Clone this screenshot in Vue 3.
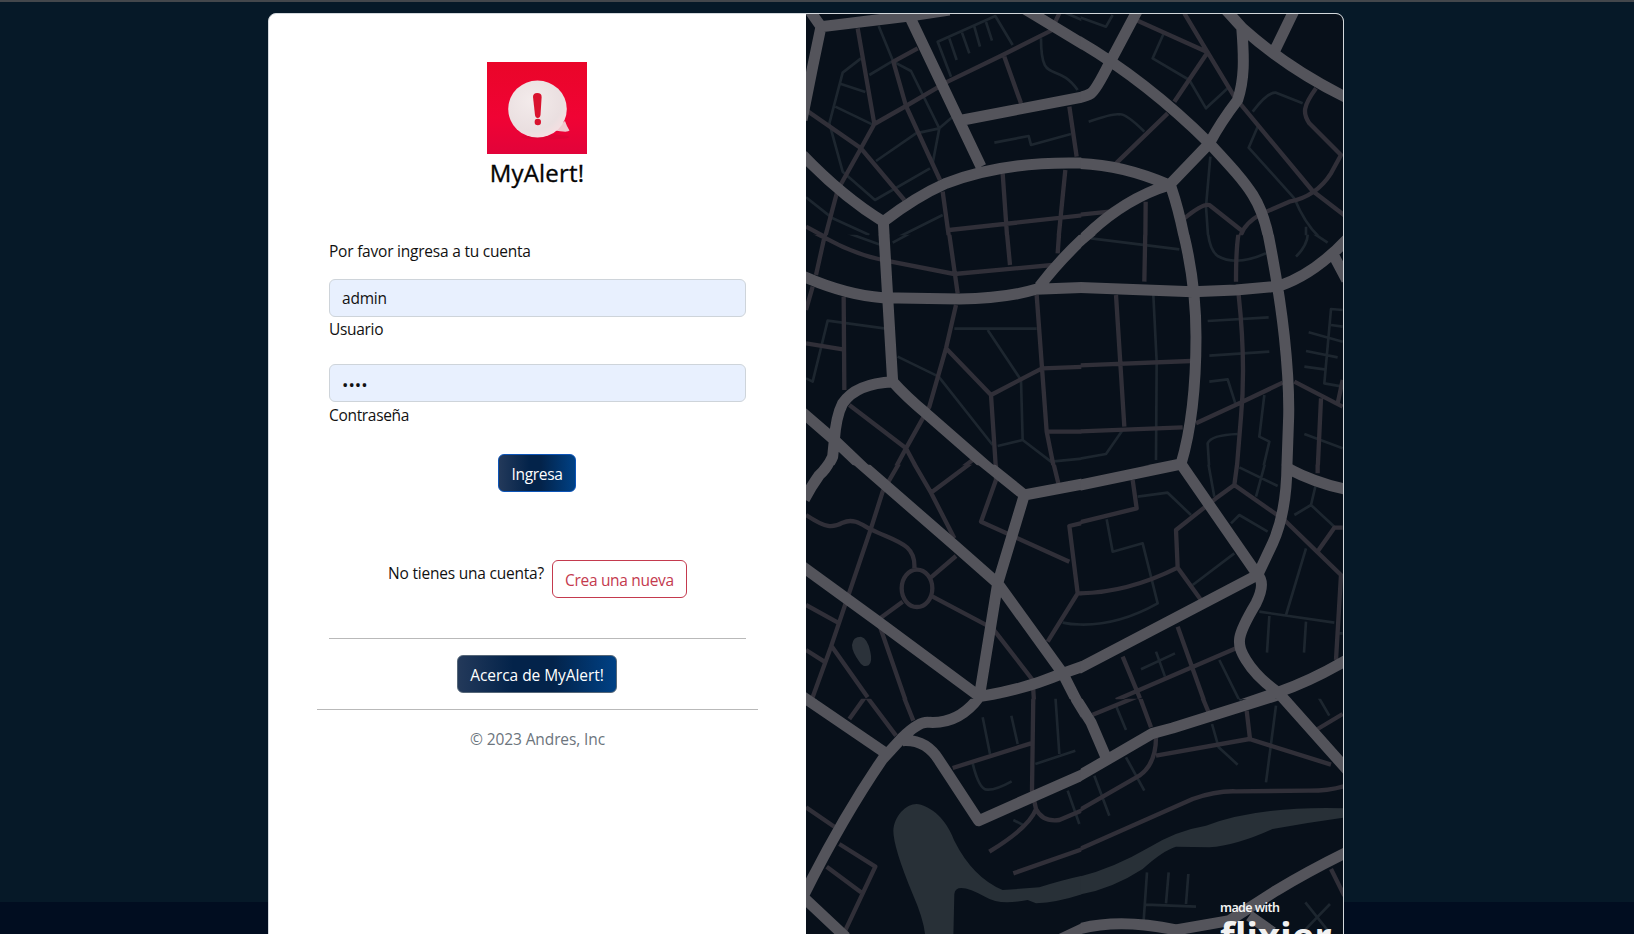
<script setup>
import { ref } from 'vue'

const user = ref('admin')
const password = ref('1234')

// The city map is split into blocks; every block lists its streets by rank.
const blocks = [
  {
    col: 0,
    row: 0,
    thin: 'M218 78L262 185L315 213L400 385L380 490M165 175L110 218L70 370L110 515L207 600L372 505M105 252L178 276M88 320L200 374M210 483L330 400L400 385L440 350M435 230L395 125L568 48L620 135M430 115L452 180M468 98L490 160M505 80L522 140M540 66L558 122M705 115C705 260 750 180 815 270M565 428L668 408L675 435L795 402M0 592L80 655L190 705M270 715L410 645M770 35L840 65M262 182L190 225',
    mid: 'M155 85L205 372L165 445L95 570L55 720M0 330L165 445L295 600M205 372L300 318L425 245L590 165L735 92L760 40M335 145L262 185L300 318L402 540M595 170L645 310M790 320L812 470M410 575L430 720M430 690L840 645M590 520L604 720M778 510L757 720M0 680L60 712',
    major: 'M10 30L45 80L20 200L-12 360M45 80L310 48L430 30M310 48L525 500M-10 465Q110 590 232 665Q330 590 420 550Q600 480 850 490M232 665L236 740M470 360L850 287M640 17L678 40L860 150M795 753L850 703'
  },
  {
    col: 1,
    row: 0,
    thin: 'M0 48L90 80L110 45M262 103L230 175L340 240L390 325L455 265M38 365Q110 340 130 343Q150 340 205 395M530 335Q575 275 600 278L680 310M545 380L518 443L655 595Q690 680 740 720M403 470L390 620L397 720M690 680L690 720',
    mid: 'M180 60L395 157L295 305M325 40L395 157L475 290L710 573L810 650M275 340L120 490M720 265C680 320 680 340 700 370L795 465L765 520Q720 590 640 605L560 640Q500 670 490 720M0 645L100 635M209 605L208 720M325 655Q380 610 400 615L495 690M0 400L5 470',
    major: 'M-10 114Q200 233 400 430C520 560 560 600 582 735M185 30L100 190Q60 270 45 280Q30 290 -10 297M450 30L500 85Q640 210 820 297M497 80C505 180 505 240 485 300Q435 365 400 430L280 555M655 30L597 150M-10 490Q130 490 280 555Q130 600 0 738M285 560Q312 640 330 740'
  },
  {
    col: 0,
    row: 1,
    thin: 'M100 0L225 45M260 38L330 0M0 445L20 455L65 272L240 296M445 296L692 296M545 300L645 450L650 630L575 648M650 630L735 695L840 685M275 380L398 440L560 645',
    mid: 'M10 0L60 25Q150 75 240 92L445 132L740 105M60 0L30 135M20 170L0 240M428 0L455 190M450 225L420 355L370 530L300 655L265 720M430 5L500 0M602 0L612 105M760 0L755 70M113 200L115 480M0 340L110 358M420 355L555 495L708 415L840 410M555 495L570 720M692 195L722 605L745 720M722 605L840 605M130 525L300 655L335 720M460 720L500 690',
    major: 'M-10 138Q120 195 230 203L460 207Q600 205 690 178L850 172M232 -20L260 455M700 170Q760 90 850 8M260 455Q300 500 360 550L575 738M262 455Q150 460 110 520Q90 560 85 630L80 680Q68 710 35 740M-10 548L85 630L190 730'
  },
  {
    col: 1,
    row: 1,
    thin: 'M45 25L310 58M232 195L242 395L240 690M395 0Q400 60 425 78Q480 110 570 70M395 273L578 262M400 377L580 365M400 455L455 448L478 520M485 612Q405 615 395 640L400 720M565 495L550 620L580 635L560 720M0 688L90 672L140 600M695 0Q700 40 660 80M705 5L755 38M800 240L765 237L745 460L800 470M765 285L800 290M698 307L800 335M690 363L785 382M685 410L745 418M685 612L800 655M490 710L520 720',
    mid: 'M208 0L205 155M120 195L145 590M-5 407L345 393M-5 605L320 592M360 580L490 520L620 458M490 0Q480 40 480 155M488 195Q510 400 495 560L482 720M655 455L800 530M735 505L725 720M800 450L785 520',
    major: 'M-10 52L15 30L75 -20M-10 172Q200 180 350 185L480 180L610 168Q720 130 820 20M316 -15Q360 150 360 320Q360 550 315 702M572 -10Q610 180 625 320Q640 460 638 560L632 730M775 80L812 150M120 741L315 702L345 745M635 715L690 740'
  },
  {
    col: 0,
    row: 2,
    thin: 'M770 488Q800 495 840 493M750 5L840 0',
    mid: 'M285 0L230 95L195 205L75 560L15 725M0 165C60 205 80 205 110 188C150 170 180 205 195 208C270 245 330 250 325 325M375 352L450 288M380 410L560 505L680 660L684 725M290 425L215 480L300 725M318 0L375 98L445 235M375 98L500 5M570 0V60L525 185L790 305M740 0L757 70M845 185L790 198L815 400L840 400M815 400L725 545M0 435L100 490M0 570L55 605M78 560L185 712M379 385A46 56 0 1 1 287 385A46 56 0 1 1 379 385',
    major: 'M75 -10Q68 20 40 45Q15 80 -5 118M140 -10L450 260L575 370L770 640L820 738M-10 320L210 480L540 724M512 -10L655 105L850 68M655 105L575 370L520 710Q650 690 770 640L850 612M-30 696L40 744'
  },
  {
    col: 1,
    row: 2,
    thin: 'M185 110L275 98L345 165M92 178L110 275L200 250L245 430Q120 500 0 493M395 0L415 110M570 0L540 110M490 22L605 78M465 190L490 165L575 215M350 375L475 280M718 80L705 135L655 165M705 135L775 200M690 265L630 465M550 455L775 488M580 468L573 578M690 485L684 578M195 628L297 580M240 575L267 650M430 600L492 725M780 520L800 520',
    mid: 'M0 190L182 145L170 60M0 290L5 400Q150 400 305 323L300 210L420 115L475 75L485 0M305 323L375 420M475 75L625 180L795 345L780 600M725 0L725 40M800 203L775 203L722 278M305 500L387 730M140 590L192 715M120 720L480 565',
    major: 'M-10 80L315 12L545 345L-10 635M633 -10Q635 150 590 250L545 345Q570 370 540 430C480 530 480 550 510 600Q540 650 605 697M635 25Q720 70 812 88M480 740L605 697Q700 665 812 600M605 697L650 745M-40 640L10 738'
  },
  {
    col: 0,
    row: 3,
    thin: 'M530 70L552 180M616 65L635 150M748 5L760 180M688 210L808 170M500 208Q520 290 545 287Q570 288 617 262M622 378L655 395M785 290L820 390',
    mid: 'M130 75L180 5L270 125M290 0L322 80M440 222L675 148M682 0L678 290L690 345Q670 400 550 473M690 345Q710 385 760 378L845 342M622 538L845 460M0 340L85 398M100 450L208 518L115 715M62 518L165 595',
    major: 'M-30 -6L235 175M520 8Q460 90 370 85Q340 80 290 130L230 195Q110 370 -8 606M-8 610L120 730M290 140Q360 135 400 200L518 380L850 233M400 -80L520 8Q650 -12 770 -62M794 -32L811 16L850 80M765 735L850 695',
    water: 'M262 410C265 360 310 320 345 332C400 350 430 400 445 440Q500 550 590 588L700 580Q780 555 845 542L845 595Q760 625 690 628L665 618Q580 635 540 610Q450 560 445 600L442 730L358 730Q355 680 320 600Q262 460 262 410Z'
  },
  {
    col: 1,
    row: 3,
    thin: 'M120 35L150 108M55 245L100 365M150 190L205 290M485 0L495 20M408 90L428 160L485 212M600 35L570 265M725 5L760 65M213 535L203 680M278 535L270 628M337 540L330 630M210 632L360 638M688 625L760 715M762 630L680 715M0 360L10 395',
    mid: 'M50 62L190 5L225 100M375 0L400 60M-5 357L190 245Q240 210 240 130M240 185L520 135L765 212M512 50L522 135M725 105L800 60M-5 472L350 315Q420 290 480 292L700 290Q760 290 805 276M765 525L805 605',
    major: 'M-16 -32L1 16L45 85L90 190M-10 257L230 118L290 102L605 3L810 -102M600 -12L820 235M-10 710Q120 670 300 708L460 680L600 590Q700 530 812 475M520 665L590 715',
    water: 'M-8 552Q100 530 220 460Q300 410 390 395Q550 335 810 343L810 370Q700 385 590 405Q480 455 400 460L300 458Q260 470 200 525Q100 590 -8 605Z'
  }
]

const layers = ['thin', 'mid', 'water', 'major']
const tops = [-14, 216, 446, 680]
const heights = [692, 692, 704, 740]
const place = (b) => `translate(${b.col * 270} ${tops[b.row]}) scale(.33333)`
const clipOf = (b) => `block-${b.col}-${b.row}`
</script>

<template>
  <div class="page">
    <main class="card">
      <section class="login">
        <header class="brand">
          <svg class="logo" viewBox="0 0 100 92">
            <defs>
              <linearGradient id="red" x1="0" y1="0" x2="0" y2="1">
                <stop offset="0" stop-color="#ea0529" />
                <stop offset=".6" stop-color="#f00334" />
                <stop offset="1" stop-color="#e2033a" />
              </linearGradient>
              <radialGradient id="pearl" cx=".4" cy=".35" r=".7">
                <stop offset="0" stop-color="#f3ebeb" />
                <stop offset=".75" stop-color="#eadfe0" />
                <stop offset="1" stop-color="#f6dfe2" />
              </radialGradient>
            </defs>
            <rect width="100" height="92" fill="url(#red)" />
            <ellipse cx="58" cy="75" rx="24" ry="2.500" fill="#cf0731" opacity=".4" />
            <path d="M78 59Q80 65 82.500 68.500Q81 71 66 68Z" fill="#efc9cf" />
            <ellipse cx="50.500" cy="47" rx="29.300" ry="28.500" fill="url(#pearl)" />
            <path d="M46 35Q46 31 50.200 31Q54.800 31 54.600 35L53.500 53Q53 56 50.700 56Q48.400 56 48 53Z" fill="#d9122e" />
            <circle cx="50.800" cy="60" r="3.200" fill="#d9122e" />
          </svg>
          <h4>MyAlert!</h4>
        </header>

        <form class="form" @submit.prevent>
          <p class="intro">Por favor ingresa a tu cuenta</p>
          <div class="field first">
            <input id="user" v-model="user" type="text" />
            <label for="user">Usuario</label>
          </div>
          <div class="field second">
            <input id="pass" v-model="password" class="secret" type="password" />
            <label for="pass">Contraseña</label>
          </div>
          <button class="btn enter" type="submit">Ingresa</button>
          <div class="signup">
            <p>No tienes una cuenta?</p>
            <button class="btn outline" type="button">Crea una nueva</button>
          </div>
          <hr />
          <button class="btn about" type="button">Acerca de MyAlert!</button>
        </form>
        <footer class="foot">© 2023 Andres, Inc</footer>
      </section>

      <section class="map">
        <svg class="streets" viewBox="0 0 537 920">
          <defs>
            <clipPath v-for="b in blocks" :id="clipOf(b)" :key="clipOf(b)">
              <rect :x="b.col ? 14 : -20" y="14" :width="b.col ? 820 : 846" :height="heights[b.row]" />
            </clipPath>
          </defs>
          <g v-for="layer in layers" :key="layer" :class="layer">
            <template v-for="b in blocks" :key="clipOf(b)">
              <g v-if="b[layer]" :transform="place(b)" :clip-path="`url(#${clipOf(b)})`">
                <path :d="b[layer]" />
              </g>
            </template>
          </g>
          <path
            class="pond"
            transform="translate(0 446) scale(.33333)"
            d="M138 555Q140 530 165 530Q185 535 193 575Q200 605 188 616Q172 624 160 605Q138 575 138 555Z"
          />
        </svg>
        <div class="credit">
          <span class="made">made with</span>
          <span class="maker">flixier</span>
        </div>
      </section>
    </main>
  </div>
</template>

<style>
body {
  margin: 0;
  overflow: hidden;
}
</style>

<style scoped>
* {
  box-sizing: border-box;
}

.page {
  height: 934px;
  overflow: hidden;
  padding-top: 11px;
  border-top: 2px solid #43474c;
  background: linear-gradient(#061928 0 900px, #010d20 900px);
  font: 15.5px/24px "Open Sans", "Noto Sans", sans-serif;
  letter-spacing: -0.22px;
  color: #111;
}

.card {
  display: grid;
  grid-template-columns: 537px 537px;
  width: 1076px;
  height: 960px;
  margin-left: 268px;
  border: 1px solid #d3d8dc;
  border-radius: 8px;
  overflow: hidden;
  background: #fff;
}

.login {
  padding: 48px 48px 0;
}

.brand {
  display: flex;
  flex-direction: column;
  align-items: center;
  padding-right: 1px;
}

.logo {
  width: 100px;
  height: 92px;
}

h4 {
  margin: 4px 0 52px;
  font-size: 24px;
  line-height: 29px;
  font-weight: 500;
  letter-spacing: 0.2px;
  color: #050505;
  -webkit-text-stroke: 0.35px #050505;
}

.form {
  display: flex;
  flex-direction: column;
  align-items: center;
  padding: 0 12px;
}

.intro {
  width: 100%;
  margin: 0 0 16px;
}

.field {
  display: flex;
  flex-direction: column;
  align-items: flex-start;
  width: 100%;
}

.first {
  margin-bottom: 23px;
}

.second {
  gap: 1px;
  margin-bottom: 27px;
}

.field input {
  width: 100%;
  height: 38px;
  padding: 6px 12px;
  border: 1px solid #ced4da;
  border-radius: 6px;
  outline: 0;
  background: #e8f0fe;
  font: inherit;
  letter-spacing: inherit;
  color: #111;
}

.field .secret {
  padding-top: 8px;
  font-size: 17px;
  letter-spacing: 0;
}

.field label {
  letter-spacing: -0.32px;
}

.btn {
  height: 38px;
  margin-right: 1px;
  padding: 1px 0 0;
  border-radius: 6px;
  font: inherit;
  letter-spacing: -0.32px;
  color: #fff;
  white-space: nowrap;
}

.enter {
  width: 78px;
  border: 1px solid #0c54b8;
  background: linear-gradient(to right, #23395a, #03234a 40%, #03234a 55%, #004185);
}

.signup {
  display: flex;
  gap: 8px;
  margin: 68px 0 40px;
}

.signup p {
  margin: 1px 0 0;
}

.outline {
  width: 135px;
  margin-right: 0;
  border: 1px solid #c43a4e;
  background: #fff;
  color: #c43a4e;
}

hr {
  width: 100%;
  height: 1px;
  margin: 0;
  border: 0;
  background: #b9b9b9;
}

.about {
  width: 160px;
  margin: 16px 1px 16px 0;
  border: 1px solid #566778;
  background: linear-gradient(to right, #23395a, #03234a 35%, #03234a 60%, #004185);
  letter-spacing: -0.06px;
}

.foot {
  padding-top: 17px;
  border-top: 1px solid #b9b9b9;
  text-align: center;
  letter-spacing: -0.1px;
  color: #6c757d;
}

.map {
  position: relative;
  background: #08101a;
}

.streets {
  display: block;
  width: 537px;
  height: 920px;
  fill: none;
  stroke-linejoin: round;
}

.thin {
  stroke: #1d262f;
  stroke-width: 8;
}

.mid {
  stroke: #302f38;
  stroke-width: 13;
}

.major {
  stroke: #54545b;
  stroke-width: 33;
}

.water {
  fill: #283037;
}

.pond {
  fill: #2b323a;
}

.credit {
  position: absolute;
  left: 414px;
  top: 886px;
  display: flex;
  flex-direction: column;
  color: #f2f2f2;
  white-space: nowrap;
}

.made {
  font: 600 12.5px/16px "Noto Sans", sans-serif;
  letter-spacing: -0.6px;
}

.maker {
  margin-top: -4px;
  font: 700 38px/46px "Noto Sans", sans-serif;
  letter-spacing: 0.2px;
}
</style>
